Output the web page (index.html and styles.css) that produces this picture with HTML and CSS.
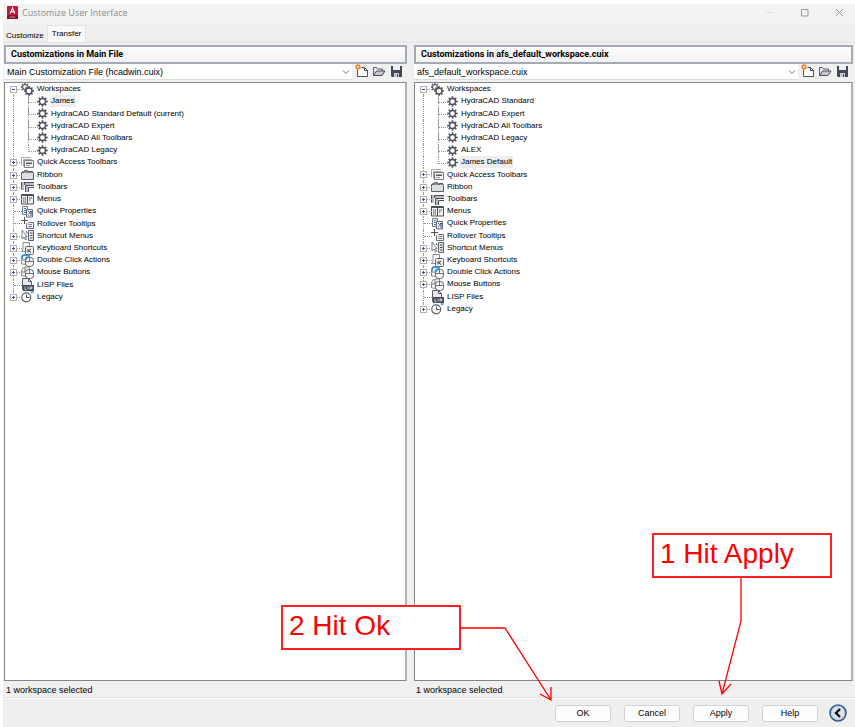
FILE: index.html
```html
<!DOCTYPE html>
<html lang="en">
<head>
<meta charset="utf-8">
<title>Customize User Interface</title>
<link rel="stylesheet" href="styles.css">
</head>
<body>
<svg class="sprite" aria-hidden="true">
  <symbol id="gear" viewBox="0 0 12 12">
    <circle cx="6" cy="6" r="3.300" fill="#fff" stroke="#4b505c" stroke-width="1.500"/>
    <path d="M6 .2v2M6 9.800v2M.2 6h2M9.800 6h2M1.900 1.900l1.500 1.500M8.600 8.600l1.500 1.500M10.100 1.900L8.600 3.400M3.400 8.600L1.900 10.100" stroke="#4b505c" stroke-width="1.800"/>
  </symbol>
  <symbol id="gears" viewBox="0 0 13 13">
    <circle cx="4" cy="4" r="2.400" fill="#fff" stroke="#4b505c"/>
    <path d="M4 0v2M0 4h2M1 1l1.400 1.400M7 1L5.600 2.400M1 7l1.400-1.400" stroke="#4b505c" stroke-width="1.300"/>
    <circle cx="8" cy="8" r="3" fill="#fff" stroke="#4b505c" stroke-width="1.400"/>
    <path d="M8 3v2M8 11v2M3 8h2M11 8h2M4.500 4.500L6 6M10 10l1.500 1.500M11.500 4.500L10 6M6 10l-1.500 1.500" stroke="#4b505c" stroke-width="1.500"/>
  </symbol>
  <symbol id="quick" viewBox="0 0 13 13">
    <path d="M.5 9.500v-8h9M2.500 10.500v-7h8" fill="none" stroke="#a5a8ad"/>
    <path d="M3.500 4.500h9v7h-9z" fill="#f3f3f4" stroke="#777b82"/>
    <path d="M5 6.500h6v1.500H5z" fill="#555a64"/><path d="M5 9.500h4" stroke="#999"/>
  </symbol>
  <symbol id="ribbon" viewBox="0 0 13 13">
    <path d="M.5 11.500V4.500h2l1-2h3l1 2h1v-1h3l1 2v6z" fill="#dcdee2" stroke="#5a5f69"/>
    <path d="M1 4h11" stroke="#3f4550"/>
  </symbol>
  <symbol id="toolbars" viewBox="0 0 13 13">
    <path d="M0 2h13v3H7v7H4V5H3v5H0z" fill="#b9bcc2"/>
    <path d="M.5 2v7.500M3.500 2v3M4.500 12V5.500H13M7.500 12V7.500H13M4 2.500h9" stroke="#4b505c" fill="none"/>
  </symbol>
  <symbol id="menus" viewBox="0 0 13 13">
    <path d="M.5 1.500h12v9.500H.5z" fill="#f3f3f4" stroke="#4b505c"/>
    <path d="M0 2.500h13M6.500 2v9" stroke="#4b505c"/>
    <path d="M2 5h3M2 7h3M2 9h3M8 5h3.500M8 7h2" stroke="#3c414d" stroke-dasharray="1.300 .5"/>
  </symbol>
  <symbol id="props" viewBox="0 0 13 13">
    <path d="M1.500 1.500h5v8h-5z" fill="#eef2f6" stroke="#777b82"/>
    <path d="M3 3.500h2M3 5.500h2M3 7.500h2" stroke="#2d78c0"/>
    <path d="M5.500 4.500h6v7.500h-6z" fill="#eef2f6" stroke="#666b75"/>
    <path d="M7 6.500h1M9 6.500h2M7 10h1M9 10h2" stroke="#4b505c"/><path d="M8 8h3" stroke="#2d78c0" stroke-width="1.500"/>
  </symbol>
  <symbol id="rollover" viewBox="0 0 13 13">
    <path d="M3.500 0v7M0 3.500h7" stroke="#4b505c"/>
    <path d="M5.500 11.500v-5h5" stroke="#777b82" fill="none"/>
    <path d="M7.500 5.500h5v6h-7v-4" fill="#eee" stroke="#666b75"/><path d="M7.500 7.500h3.500M7.500 9.500h3.500" stroke="#777b82"/>
  </symbol>
  <symbol id="shortcut" viewBox="0 0 13 13">
    <path d="M1 1v9l2-2 1.500 3 1-.5L4.500 7.500H6z" fill="#fff" stroke="#5a5f69" stroke-width=".8"/>
    <path d="M7.500 1.500h5v10h-5z" fill="#e4e6e9" stroke="#5a5f69"/>
    <path d="M9 4h2.500M9 6.500h2.500M9 9h2.500" stroke="#4b505c"/><path d="M5.500 2v2h2" stroke="#777b82" fill="none"/>
  </symbol>
  <symbol id="keyboard" viewBox="0 0 13 13">
    <path d="M2 .5h6.500v7L7 9.500H.5L2 7z" fill="#f7f7f7" stroke="#888c93"/>
    <rect x="4.500" y="4.500" width="8" height="8" rx="1" fill="#f1f1f2" stroke="#5a5f69"/>
    <path d="M7 7v3.500M10 7L7.500 8.700 10 10.500" stroke="#333846" fill="none"/>
  </symbol>
  <symbol id="mouse" viewBox="0 0 13 13">
    <path d="M.5 10V5Q1 1 4.500 1H8.500L9 10.500z" fill="#f5f5f5" stroke="#888c93"/>
    <rect x="4.500" y="3.500" width="8" height="9" rx="3" fill="#f7f7f7" stroke="#5a5f69"/>
    <path d="M5 7.500h7.500M8.500 3.500v4M1 6h3M4 1.500V6" stroke="#6d727b" fill="none"/>
  </symbol>
  <symbol id="double" viewBox="0 0 13 13">
    <path d="M.5 10V5Q1 1 4.500 1H8.500L9 10.500z" fill="#f5f5f5" stroke="#888c93"/>
    <rect x="4.500" y="3.500" width="8" height="9" rx="3" fill="#f7f7f7" stroke="#5a5f69"/>
    <path d="M5 7.500h7.500M8.500 3.500v4M1 6h3" stroke="#6d727b" fill="none"/>
    <path d="M1 5V3Q1 1 3.500 1H8M5 6V4.500Q5 3 8 3" stroke="#1d85d0" stroke-width="1.500" fill="none"/>
  </symbol>
  <symbol id="lisp" viewBox="0 0 13 13">
    <path d="M1.500.5h6l3 3v8h-9z" fill="#e9eaec" stroke="#5a5f69"/><path d="M7.500.5v3h3" fill="none" stroke="#5a5f69"/>
    <path d="M2 7h11v6H2z" fill="#474c57"/><path d="M4 8.500v3h1.500M7 8.500v3M9 11.500V9h2v1.500H9" stroke="#fff" stroke-width=".7" fill="none"/>
  </symbol>
  <symbol id="legacy" viewBox="0 0 13 13">
    <circle cx="5.200" cy="7.300" r="4.500" fill="#fff" stroke="#5a5f69" stroke-width="1.200"/>
    <path d="M5.500 4.500v3h3" stroke="#4b505c" fill="none"/><path d="M11 .5v3M9.500 2h3.500" stroke="#2d8fd8" fill="none"/>
  </symbol>
  <symbol id="new" viewBox="0 0 14 14">
    <path d="M2.500 6v6.500h10v-6l-3-3h-3" fill="#fafafa" stroke="#4b505c"/><path d="M9.500 3.500v3h3" fill="none" stroke="#4b505c"/>
    <path d="M3 0v6M0 3h6M1 1l4 4M5 1L1 5" stroke="#f07818" stroke-width="1.200"/><circle cx="3" cy="3" r="1" fill="#fff0a0"/>
  </symbol>
  <symbol id="open" viewBox="0 0 14 14">
    <path d="M1.500 11.500v-8h3l1 1.500h5v2" fill="#e8e9ec" stroke="#5a5f69"/>
    <path d="M1.500 11.500l3-4.500h8.500l-3 4.500z" fill="#c4c9d0" stroke="#4b505c"/>
  </symbol>
  <symbol id="save" viewBox="0 0 14 14">
    <path d="M2 2h11v11H3l-1-1z" fill="#414957"/><path d="M4 2h7v4H4z" fill="#eceef1"/><path d="M5 9h5v4H5z" fill="#c7ccd3"/><path d="M8 10h1v3H8z" fill="#414957"/>
  </symbol>
</svg>

<main class="window">
  <header class="titlebar">
    <svg class="logo" viewBox="0 0 12 14"><rect width="12" height="14" rx="1" fill="#c8173c"/><path d="M0 10h12v4H0z" fill="#811027"/><path d="M3.500 8L6 2l2.500 6M4.500 6h3" stroke="#fff" stroke-width="1.300" fill="none"/><path d="M3 12h6" stroke="#e59aaa"/></svg>
    <h1>Customize User Interface</h1>
    <div class="controls">
      <button aria-label="Minimize" disabled><svg viewBox="0 0 9 9"><path d="M1 4.500h7" stroke="#ddd"/></svg></button>
      <button aria-label="Maximize"><svg viewBox="0 0 9 9"><path d="M1.500 1.500h6.500v6.500H1.500z" fill="none" stroke="#999"/></svg></button>
      <button aria-label="Close"><svg viewBox="0 0 9 9"><path d="M1 1l7 7M8 1L1 8" stroke="#999"/></svg></button>
    </div>
  </header>
  <nav class="tabs"><button class="tab">Customize</button><button class="tab active">Transfer</button></nav>
  <div class="panels">
    <section class="panel">
      <h2>Customizations in Main File</h2>
      <div class="filebar">
        <div class="combo"><select aria-label="Main file"><option>Main Customization File (hcadwin.cuix)</option></select><svg viewBox="0 0 8 8"><path d="M1 2.500l3 3 3-3" fill="none" stroke="#777"/></svg></div>
        <button aria-label="New"><svg><use href="#new"/></svg></button><button aria-label="Open"><svg><use href="#open"/></svg></button><button aria-label="Save"><svg><use href="#save"/></svg></button>
      </div>
      <div class="treebox">
        <ul class="tree main-tree">
          <li class="open"><i></i><svg><use href="#gears"/></svg><span>Workspaces</span></li>
          <li class="child"><svg><use href="#gear"/></svg><span class="selected">James</span></li>
          <li class="child"><svg><use href="#gear"/></svg><span>HydraCAD Standard Default (current)</span></li>
          <li class="child"><svg><use href="#gear"/></svg><span>HydraCAD Expert</span></li>
          <li class="child"><svg><use href="#gear"/></svg><span>HydraCAD All Toolbars</span></li>
          <li class="child end"><svg><use href="#gear"/></svg><span>HydraCAD Legacy</span></li>
          <li><i class="plus"></i><svg><use href="#quick"/></svg><span>Quick Access Toolbars</span></li>
          <li><i class="plus"></i><svg><use href="#ribbon"/></svg><span>Ribbon</span></li>
          <li><i class="plus"></i><svg><use href="#toolbars"/></svg><span>Toolbars</span></li>
          <li><i class="plus"></i><svg><use href="#menus"/></svg><span>Menus</span></li>
          <li><svg><use href="#props"/></svg><span>Quick Properties</span></li>
          <li><svg><use href="#rollover"/></svg><span>Rollover Tooltips</span></li>
          <li><i class="plus"></i><svg><use href="#shortcut"/></svg><span>Shortcut Menus</span></li>
          <li><i class="plus"></i><svg><use href="#keyboard"/></svg><span>Keyboard Shortcuts</span></li>
          <li><i class="plus"></i><svg><use href="#double"/></svg><span>Double Click Actions</span></li>
          <li><i class="plus"></i><svg><use href="#mouse"/></svg><span>Mouse Buttons</span></li>
          <li><svg><use href="#lisp"/></svg><span>LISP Files</span></li>
          <li><i class="plus"></i><svg><use href="#legacy"/></svg><span>Legacy</span></li>
        </ul>
      </div>
      <p class="status">1 workspace selected</p>
    </section>
    <section class="panel">
      <h2>Customizations in afs_default_workspace.cuix</h2>
      <div class="filebar">
        <div class="combo"><select aria-label="Transfer file"><option>afs_default_workspace.cuix</option></select><svg viewBox="0 0 8 8"><path d="M1 2.500l3 3 3-3" fill="none" stroke="#777"/></svg></div>
        <button aria-label="New"><svg><use href="#new"/></svg></button><button aria-label="Open"><svg><use href="#open"/></svg></button><button aria-label="Save"><svg><use href="#save"/></svg></button>
      </div>
      <div class="treebox">
        <ul class="tree transfer-tree">
          <li class="open"><i></i><svg><use href="#gears"/></svg><span>Workspaces</span></li>
          <li class="child"><svg><use href="#gear"/></svg><span>HydraCAD Standard</span></li>
          <li class="child"><svg><use href="#gear"/></svg><span>HydraCAD Expert</span></li>
          <li class="child"><svg><use href="#gear"/></svg><span>HydraCAD All Toolbars</span></li>
          <li class="child"><svg><use href="#gear"/></svg><span>HydraCAD Legacy</span></li>
          <li class="child"><svg><use href="#gear"/></svg><span>ALEX</span></li>
          <li class="child end"><svg><use href="#gear"/></svg><span class="selected">James Default</span></li>
          <li><i class="plus"></i><svg><use href="#quick"/></svg><span>Quick Access Toolbars</span></li>
          <li><i class="plus"></i><svg><use href="#ribbon"/></svg><span>Ribbon</span></li>
          <li><i class="plus"></i><svg><use href="#toolbars"/></svg><span>Toolbars</span></li>
          <li><i class="plus"></i><svg><use href="#menus"/></svg><span>Menus</span></li>
          <li><svg><use href="#props"/></svg><span>Quick Properties</span></li>
          <li><svg><use href="#rollover"/></svg><span>Rollover Tooltips</span></li>
          <li><i class="plus"></i><svg><use href="#shortcut"/></svg><span>Shortcut Menus</span></li>
          <li><i class="plus"></i><svg><use href="#keyboard"/></svg><span>Keyboard Shortcuts</span></li>
          <li><i class="plus"></i><svg><use href="#double"/></svg><span>Double Click Actions</span></li>
          <li><i class="plus"></i><svg><use href="#mouse"/></svg><span>Mouse Buttons</span></li>
          <li><svg><use href="#lisp"/></svg><span>LISP Files</span></li>
          <li><i class="plus"></i><svg><use href="#legacy"/></svg><span>Legacy</span></li>
        </ul>
      </div>
      <p class="status">1 workspace selected</p>
    </section>
  </div>
  <footer class="actions">
    <button class="push">OK</button><button class="push">Cancel</button><button class="push">Apply</button><button class="push">Help</button>
    <button class="collapse" aria-label="Collapse"><svg viewBox="0 0 18 18"><circle cx="9" cy="9" r="8" fill="#dfe4ee" stroke="#2f5f8d" stroke-width="1.600"/><circle cx="9" cy="9" r="6.500" fill="none" stroke="#b4c8dc"/><path d="M11 5L7 9l4 4" fill="none" stroke="#111" stroke-width="2.400"/></svg></button>
  </footer>
</main>

<div class="notes">
  <svg class="leaders" viewBox="0 0 855 727"><path d="M461 628h44l46 72M540 694l11 6v-13M741 577v44l-19 73M719 681l3 13 9-10" fill="none" stroke="#f00" stroke-width="1.300"/></svg>
  <div class="note note-ok">2 Hit Ok</div>
  <div class="note note-apply">1 Hit Apply</div>
</div>
</body>
</html>
```

FILE: styles.css
```css
* { box-sizing: border-box; }

body {
  margin: 0;
  height: 100vh;
  padding: 4px 0 0 3px;
  background: #fff;
  color: #000;
  font: 9px/12px "Liberation Sans", Arial, sans-serif;
}

h1, h2, p, ul { margin: 0; padding: 0; font-weight: normal; }
button, select { font: inherit; color: inherit; margin: 0; padding: 0; border: 0; background: none; }
svg { display: block; flex: none; }
.sprite { position: absolute; width: 0; height: 0; }

.window { display: flex; flex-direction: column; height: 100%; background: #efefef; }

.titlebar { display: flex; align-items: center; height: 20px; padding: 0 7px 0 4px; background: #f3f3f3; }
.logo { width: 11px; height: 13px; margin-bottom: 4px; }
.titlebar h1 { margin: 0 auto 3px 4px; font: 9px/12px "Open Sans", sans-serif; color: #8b8b8b; }
.controls { display: flex; gap: 18px; margin-bottom: 4px; }
.controls button { width: 17px; height: 12px; display: grid; place-items: center; }
.controls svg { width: 9px; height: 9px; }

.tabs { display: flex; align-items: flex-end; height: 18px; font-size: 8px; }
.tab { height: 13px; padding: 0 3px; }
.tab.active { height: 17px; padding: 0 4px; background: #f9f9f9; border: 1px solid #e3e3e3; border-bottom: 0; }

.panels { flex: 1; min-height: 0; display: grid; grid-template-columns: 403fr 439fr; gap: 7px; padding: 2px 2px 0 1px; border-top: 1px solid #e4e4e4; background: #f0f0f0; }
.panel { display: flex; flex-direction: column; min-width: 0; }
.panel h2 { height: 19px; padding: 0 5px; border: 2px solid #a4abb5; background: linear-gradient(#fdfdfd, #f1f1f1); font: bold 9px/15px Roboto, sans-serif; }

.filebar { display: flex; align-items: flex-start; gap: 3px; height: 18px; padding-right: 4px; }
.combo { position: relative; flex: 1; height: 16px; background: #fff; border-bottom: 1px solid #ddd; }
.combo select { display: block; width: 100%; height: 15px; padding: 0 14px 0 3px; appearance: none; }
.combo svg { position: absolute; right: 2px; top: 4px; width: 8px; height: 8px; pointer-events: none; }
.filebar button, .filebar button svg { width: 14px; height: 14px; }

.treebox { flex: 1; min-height: 0; border: 1px solid #858585; border-right: 2px solid #b1b1b1; background: #fff; }
.status { height: 17px; padding: 3px 2px 0; }

.tree { display: grid; grid-auto-rows: 1fr; list-style: none; font-size: 8px; }
.main-tree { height: 220px; }
.transfer-tree { height: 232px; }
.tree li { position: relative; display: flex; align-items: center; padding-left: 16px; min-height: 0; }
.tree li > svg { position: relative; width: 13px; height: 13px; margin-right: 2px; }
.tree .child { padding-left: 32px; }
.tree .child > svg { width: 11px; height: 11px; }
.tree span { padding: 0 1px; line-height: 12px; white-space: nowrap; }
.tree .selected { background: #ededed; }
.tree li::before { content: ""; position: absolute; left: 8px; top: 0; bottom: 0; border-left: 1px dotted #999; }
.tree li::after { content: ""; position: absolute; left: 9px; top: 6px; width: 8px; border-top: 1px dotted #999; }
.tree li:first-child::before { top: 6px; }
.tree li:last-child::before { bottom: 6px; }
.tree .child::after { left: 23px; top: 0; width: 9px; height: 7px; border: dotted #999; border-width: 0 0 1px 1px; }
.tree .child:not(.end) { background: repeating-linear-gradient(#999 0 1px, transparent 1px 2px) 23px 0 / 1px 100% no-repeat; }
.tree i { position: absolute; z-index: 1; left: 5px; top: 3px; width: 7px; height: 7px; border: 1px solid #b0b0b0; background: linear-gradient(#3b568e, #3b568e) center / 3px 1px no-repeat #fff; }
.tree .plus { background: linear-gradient(#3b568e, #3b568e) center / 3px 1px no-repeat, linear-gradient(#3b568e, #3b568e) center / 1px 3px no-repeat #fff; }

.actions { display: flex; align-items: center; justify-content: flex-end; gap: 13px; height: 29px; padding: 0 8px 0 0; border-top: 1px solid #fafafa; box-shadow: 0 -1px #e2e2e2; }
.push { width: 56px; height: 17px; border: 1px solid #d2d2d2; border-radius: 3px; background: #fdfdfd; }
.collapse, .collapse svg { width: 18px; height: 18px; }
.collapse { margin-left: -2px; }

.notes { position: absolute; right: 0; bottom: 0; width: 855px; height: 727px; pointer-events: none; }
.leaders { width: 855px; height: 727px; }
.note { position: absolute; width: 180px; height: 45px; padding: 0 6px; border: 2px solid #ff2020; background: #fff; color: #f00; font-size: 28px; line-height: 38px; }
.note-ok { left: 281px; top: 605px; }
.note-apply { left: 652px; top: 533px; }
```
